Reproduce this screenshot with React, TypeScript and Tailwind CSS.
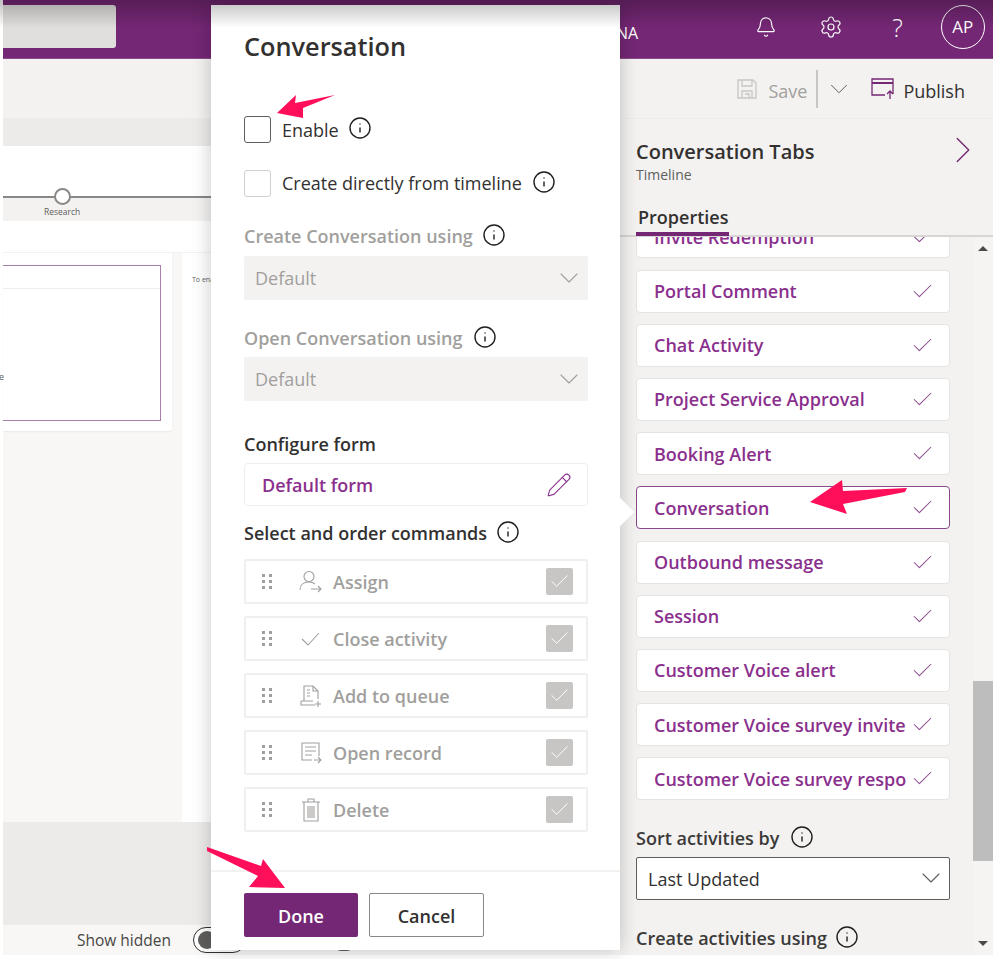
import { Bell, Check, ChevronDown, ChevronRight, Info, Pencil, Settings } from 'lucide-react';
import type { ReactNode } from 'react';

const tabs = [
  'Invite Redemption',
  'Portal Comment',
  'Chat Activity',
  'Project Service Approval',
  'Booking Alert',
  'Conversation',
  'Outbound message',
  'Session',
  'Customer Voice alert',
  'Customer Voice survey invite',
  'Customer Voice survey respo',
];

function InfoIcon({ className = '' }: { className?: string }) {
  return <Info className={`w-[24px] h-[24px] text-[#201f1e] shrink-0 ${className}`} strokeWidth={1.4} />;
}

function Grip() {
  return (
    <svg width="10" height="16" viewBox="0 0 10 16" fill="#a19f9d">
      <rect x="0" y="0" width="3" height="3" />
      <rect x="7" y="0" width="3" height="3" />
      <rect x="0" y="6" width="3" height="3" />
      <rect x="7" y="6" width="3" height="3" />
      <rect x="0" y="12" width="3" height="3" />
      <rect x="7" y="12" width="3" height="3" />
    </svg>
  );
}

function AssignIcon() {
  return (
    <svg width="24" height="24" viewBox="0 0 24 24" fill="none" stroke="#a19f9d" strokeWidth="1.1">
      <circle cx="10" cy="6.5" r="5" />
      <path d="M1 20c0-5 3.5-8 9-8 2.5 0 4.5.7 6 2" />
      <path d="M12 19h10M19 16l3 3-3 3" />
    </svg>
  );
}

function CloseIcon() {
  return (
    <svg width="24" height="24" viewBox="0 0 24 24" fill="none" stroke="#a19f9d" strokeWidth="1.1">
      <path d="M3 12l6 6L20 6" />
    </svg>
  );
}

function QueueIcon() {
  return (
    <svg width="24" height="24" viewBox="0 0 24 24" fill="none" stroke="#a19f9d" strokeWidth="1.1">
      <path d="M5 17V2h9l5 5v8" />
      <path d="M14 2v5h5" />
      <path d="M8 6h3M8 9h3M8 12h3" />
      <path d="M2 17v4h14M2 17h12" />
      <path d="M19 17v6M16 20h6" />
    </svg>
  );
}

function RecordIcon() {
  return (
    <svg width="24" height="24" viewBox="0 0 24 24" fill="none" stroke="#a19f9d" strokeWidth="1.1">
      <path d="M13 19H3V2h17v13" />
      <path d="M6 6h11M6 10h11M6 14h7" />
      <path d="M15 19h7M19 16l3 3-3 3" />
    </svg>
  );
}

function TrashIcon() {
  return (
    <svg width="24" height="26" viewBox="0 0 24 26" fill="none" stroke="#a19f9d" strokeWidth="1.1">
      <path d="M3 5h18M9 5V2h6v3" />
      <path d="M5 5v19h14V5" />
      <path d="M9 9v12M11 9v12M13 9v12M15 9v12" />
    </svg>
  );
}

function SaveIcon() {
  return (
    <svg width="20" height="20" viewBox="0 0 20 20" fill="none" stroke="#c8c6c4" strokeWidth="1.3">
      <path d="M1 1h15l3 3v15H1z" />
      <path d="M5 1v6h10V1" />
      <path d="M5 19v-7h10v7" />
      <path d="M8 15h4v4" />
    </svg>
  );
}

function PublishIcon() {
  return (
    <svg width="23" height="21" viewBox="0 0 23 21" fill="none" stroke="#742774" strokeWidth="1.3">
      <path d="M14 17H1V1h21v15" />
      <path d="M1 5h21" strokeWidth="2" />
      <path d="M19 21v-8M16 16l3-3 3 3" />
    </svg>
  );
}

function CommandRow({ icon, label }: { icon: ReactNode; label: string }) {
  return (
    <div className="h-[45px] border-2 border-[#f0efee] rounded-[2px] flex items-center pl-[16px] pr-[13px]">
      <Grip />
      <div className="w-[24px] flex justify-center ml-[27px]">{icon}</div>
      <span className="ml-[10px] text-[18px] font-semibold text-[#a19f9d] leading-none">{label}</span>
      <span className="ml-auto w-[27px] h-[27px] rounded-[2px] bg-[#c8c6c4] flex items-center justify-center">
        <Check className="w-[23px] h-[23px] text-white" strokeWidth={1} />
      </span>
    </div>
  );
}

function DisabledSelect({ className = '' }: { className?: string }) {
  return (
    <div className={`h-[44px] bg-[#f3f2f1] rounded-[2px] flex items-center justify-between pl-[11px] pr-[3px] text-[18px] text-[#a19f9d] ${className}`}>
      Default
      <ChevronDown className="w-[32px] h-[32px] text-[#a19f9d]" strokeWidth={0.8} />
    </div>
  );
}

function Modal() {
  return (
    <div className="absolute left-[211px] top-[5px] w-[409px] h-[945px] bg-white shadow-[0_0_18px_rgba(0,0,0,0.22)] flex flex-col z-10">
      {/* beak towards the selected tab */}
      <div className="absolute left-[399px] top-[497px] w-[20px] h-[20px] rotate-45 bg-white" />

      <div className="relative pt-[24px] pl-[33px] pr-[32px] flex flex-col">
        <h1 className="text-[25.3px] leading-[34px] font-semibold text-[#323130]">Conversation</h1>

        <div className="mt-[53px] flex items-center h-[27px]">
          <span className="w-[27px] h-[27px] border border-[#605e5c] rounded-[3px]" />
          <span className="ml-[11px] pt-[1px] text-[18px] text-[#323130]">Enable</span>
          <InfoIcon className="ml-[9px] -mt-[3px]" />
        </div>

        <div className="mt-[27px] flex items-center h-[27px]">
          <span className="w-[27px] h-[27px] border border-[#d2d0ce] rounded-[3px]" />
          <span className="ml-[11px] text-[18px] text-[#323130]">Create directly from timeline</span>
          <InfoIcon className="ml-[10px] -mt-[4px]" />
        </div>

        <div className="mt-[27px] h-[24px] flex items-center text-[18px] font-semibold text-[#a19f9d]">
          Create Conversation using
          <InfoIcon className="ml-[9px] -mt-[2px]" />
        </div>
        <DisabledSelect className="mt-[8px]" />

        <div className="mt-[26px] h-[24px] flex items-center text-[18px] font-semibold text-[#a19f9d]">
          Open Conversation using
          <InfoIcon className="ml-[10px] -mt-[2px]" />
        </div>
        <DisabledSelect className="mt-[7px]" />

        <div className="mt-[31px] h-[24px] flex items-center text-[18px] font-semibold text-[#323130]">Configure form</div>
        <div className="mt-[7px] h-[43px] border border-[#f0efee] rounded-[4px] flex items-center justify-between pl-[17px] pr-[15px]">
          <span className="pt-[2px] text-[18px] font-semibold text-[#8a2f8d]">Default form</span>
          <Pencil className="w-[26px] h-[26px] text-[#8a2f8d]" strokeWidth={1} />
        </div>

        <div className="mt-[15px] h-[24px] flex items-center text-[18px] font-semibold text-[#323130]">
          Select and order commands
          <InfoIcon className="ml-[9px] -mt-[2px]" />
        </div>
        <div className="mt-[14px] flex flex-col gap-[12px]">
          <CommandRow icon={<AssignIcon />} label="Assign" />
          <CommandRow icon={<CloseIcon />} label="Close activity" />
          <CommandRow icon={<QueueIcon />} label="Add to queue" />
          <CommandRow icon={<RecordIcon />} label="Open record" />
          <CommandRow icon={<TrashIcon />} label="Delete" />
        </div>
      </div>

      <div className="relative mt-auto h-[80px] border-t-2 border-[#f3f2f1] pt-[21px] px-[33px] flex gap-[11px]">
        <button className="w-[114px] h-[44px] pt-[2px] rounded-[2px] bg-[#742774] text-white text-[18px] font-semibold">Done</button>
        <button className="w-[115px] h-[44px] pt-[2px] rounded-[2px] bg-white border border-[#8a8886] text-[#323130] text-[18px] font-semibold">Cancel</button>
      </div>
    </div>
  );
}

function PropertiesPanel() {
  return (
    <aside className="w-[373px] flex flex-col bg-[#f3f2f1]">
      <header className="h-[118px] shrink-0 border-b-2 border-[#d8d6d4] pl-[16px] pr-[20px] pt-[19px] relative">
        <div className="flex items-start justify-between">
          <div>
            <h2 className="text-[20px] leading-[28px] font-semibold text-[#323130]">Conversation Tabs</h2>
            <p className="text-[14px] leading-[17px] text-[#605e5c]">Timeline</p>
          </div>
          <ChevronRight className="w-[46px] h-[46px] text-[#742774] -mt-[11px] -mr-[13px]" strokeWidth={0.7} />
        </div>
        <div className="absolute left-[16px] bottom-[-1px] w-[93px] h-[37px] border-b-[4px] border-[#742774] pl-[2px] pt-[5px] text-[18px] leading-[26px] font-semibold text-[#323130]">
          Properties
        </div>
      </header>

      <div className="flex-1 flex min-h-0">
        <div className="w-[353px] overflow-hidden pl-[16px] pr-[23px]">
          <div className="-mt-[21.6px] flex flex-col gap-[11.2px]">
            {tabs.map((tab) => (
              <div
                key={tab}
                className={`h-[43px] shrink-0 bg-white rounded-[4px] border flex items-center justify-between pl-[17px] pr-[14px] ${
                  tab === 'Conversation' ? 'border-[#8a4a8c]' : 'border-[#e6e4e2]'
                }`}
              >
                <span className="pt-[1px] text-[18px] font-semibold text-[#8a2f8d] whitespace-nowrap">{tab}</span>
                <Check className="w-[25px] h-[25px] text-[#8a4a8c] shrink-0" strokeWidth={1} />
              </div>
            ))}
          </div>
          <div className="mt-[26.6px] h-[24px] flex items-center text-[18px] font-semibold text-[#3b3a39]">
            Sort activities by
            <InfoIcon className="ml-[11px] -mt-[3px]" />
          </div>
          <div className="mt-[6px] h-[43px] bg-white border border-[#605e5c] rounded-[2px] flex items-center justify-between pl-[11px] pr-[2px] text-[18px] text-[#323130]">
            <span className="pt-[3px]">Last Updated</span>
            <ChevronDown className="w-[32px] h-[32px] text-[#605e5c]" strokeWidth={0.8} />
          </div>
          <div className="mt-[27px] h-[24px] flex items-center text-[18px] font-semibold text-[#3b3a39]">
            Create activities using
            <InfoIcon className="ml-[8px] -mt-[3px]" />
          </div>
        </div>

        {/* scrollbar */}
        <div className="w-[20px] flex flex-col bg-[#f5f4f3]">
          <div className="h-[22px] flex items-center justify-center">
            <span className="border-x-[5px] border-x-transparent border-b-[5px] border-b-[#4a4a4a]" />
          </div>
          <div className="h-[422px]" />
          <div className="h-[180px] bg-[#bdbdbd]" />
          <div className="flex-1" />
          <div className="h-[24px] flex items-center justify-center">
            <span className="border-x-[5px] border-x-transparent border-t-[5px] border-t-[#4a4a4a]" />
          </div>
        </div>
      </div>
    </aside>
  );
}

function Canvas() {
  return (
    <main className="w-[617px] flex flex-col">
      <div className="h-[27px] bg-[#edebe9]" />

      <div className="h-[50px] bg-white" />
      <div className="h-[25px] bg-[#f3f2f1] relative">
        <div className="absolute left-0 right-0 top-[0px] h-[2px] bg-[#8a8886]" />
        <span className="absolute left-[51px] top-[-8px] w-[17px] h-[17px] rounded-full border-2 border-[#8a8886] bg-white" />
        <span className="absolute left-[41px] top-[10px] text-[8.5px] leading-[12px] text-[#605e5c]">Research</span>
      </div>
      <div className="h-[32px] bg-white border-b border-[#f3f2f1]" />

      <div className="flex-1 flex min-h-0">
        <div className="w-[179px] bg-[#f8f7f6] pr-[10px]">
          <div className="h-[178px] bg-white rounded-br-[3px] pt-[12px] pr-[11px] shadow-[0_1px_2px_rgba(0,0,0,0.06)]">
            <div className="h-[156px] border border-l-0 border-[#a87fa9]">
              <div className="h-[23px] border-b border-[#f0efee]" />
              <p className="mt-[82px] text-[9px] leading-[12px] text-[#605e5c] -ml-[4px]">e</p>
            </div>
          </div>
        </div>
        <div className="flex-1 bg-white pl-[10px] pt-[21px] text-[7px] leading-[12px] text-[#605e5c]">To enable</div>
      </div>

      <div className="h-[103px] bg-[#edebe9]" />

      <div className="h-[30px] bg-[#f8f7f6] flex items-center pl-[74px] relative">
        <span className="pt-[2px] text-[15.5px] text-[#484644]">Show hidden</span>
        <span className="ml-[22px] w-[53px] h-[26px] rounded-full border border-[#323130] bg-white flex items-center pl-[4px]">
          <span className="w-[18px] h-[18px] rounded-full bg-[#605e5c]" />
        </span>
        <span className="absolute left-[332px] top-[14px] w-[18px] h-[12px] rounded-full bg-[#605e5c]" />
      </div>
    </main>
  );
}

export default function App() {
  return (
    <div
      className="relative w-[993px] h-[959px] overflow-hidden bg-white pl-[3px]"
      style={{ fontFamily: '"Open Sans", "Noto Sans", sans-serif' }}
    >
      {/* Top bar */}
      <div className="h-[59px] bg-[#742774] flex items-start text-white border-b border-[#8a4a8c]">
        <div className="w-[113px] h-[43px] mt-[5px] bg-[#e1dfdd] rounded-r-[3px]" />
        <span className="ml-[500px] mt-[21px] text-[16px] leading-[24px]">NA</span>
        <Bell className="ml-[117px] mt-[16px] w-[22px] h-[22px]" strokeWidth={1.3} />
        <Settings className="ml-[42px] mt-[15px] w-[24px] h-[24px]" strokeWidth={1.2} />
        <span className="ml-[49px] mt-[14px] text-[25px] font-light leading-[26px]">?</span>
        <span className="ml-[38px] mt-[5px] w-[44px] h-[44px] rounded-full border border-white flex items-center justify-center text-[17px]">
          AP
        </span>
      </div>

      {/* Command bar */}
      <div className="h-[60px] bg-[#f3f2f1] flex items-center justify-end pr-[28px] border-b border-[#eeedec]">
        <SaveIcon />
        <span className="ml-[11px] mt-[5px] text-[18px] text-[#a19f9d]">Save</span>
        <span className="ml-[9px] w-[2px] h-[38px] bg-[#c8c6c4]" />
        <ChevronDown className="ml-[6px] w-[30px] h-[30px] text-[#605e5c]" strokeWidth={0.8} />
        <span className="ml-[17px]">
          <PublishIcon />
        </span>
        <span className="ml-[9px] mt-[5px] text-[18px] text-[#323130]">Publish</span>
      </div>

      <div className="flex h-[836px]">
        <Canvas />
        <PropertiesPanel />
      </div>

      <Modal />

      {/* darkening at the top of the window */}
      <div className="absolute left-0 right-0 top-0 h-[28px] bg-gradient-to-b from-black/25 to-transparent z-20 pointer-events-none" />

      {/* annotation arrows */}
      <svg className="absolute left-0 top-0 z-30 pointer-events-none" width="993" height="959" fill="#ff0f5a">
        <polygon points="277,113 296,95 295,103 335,95 303,108 303,118" />
        <polygon points="810,502 842,480 843,491 907,488 905,492 843,504 847,514" />
        <polygon points="207,847 261,866 263,859 285,888 249,887 258,876 207,851" />
      </svg>
    </div>
  );
}
